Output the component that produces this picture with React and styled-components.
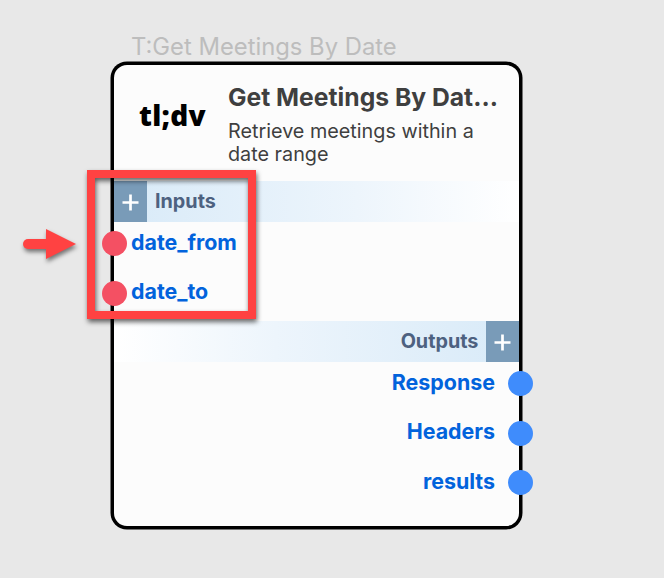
import React from "react";
import styled, { createGlobalStyle } from "styled-components";

const GlobalStyle = createGlobalStyle`
  * { box-sizing: border-box; }
  body { margin: 0; background: #e8e8e8; font-family: Inter, sans-serif; overflow: hidden; }
`;

const Canvas = styled.main`
  position: relative;
  width: 664px;
  height: 578px;
  padding: 32px 0 0 111px;
  background: #e8e8e8;
`;

const NodeLabel = styled.div`
  height: 30px;
  padding-left: 20px;
  line-height: 30px;
  font-size: 23.8px;
  color: #bdbdbd;
  white-space: nowrap;
`;

const NodeCard = styled.section`
  display: flex;
  flex-direction: column;
  width: 411.4px;
  height: 467.4px;
  border: 3px solid #000;
  border-radius: 16px;
  background: #fcfcfc;
  box-shadow: 0 0 0 0.5px #000;
`;

const Header = styled.header`
  display: flex;
  height: 115.5px;
  padding: 15px 20px 0 25px;
`;

const Logo = styled.div`
  width: 89px;
  padding-top: 15px;
  line-height: 40px;
  font-family: "Noto Sans", sans-serif;
  font-weight: 900;
  font-size: 28px;
  letter-spacing: 0.3px;
  color: #000;
`;

const Summary = styled.div`
  white-space: nowrap;
`;

const Title = styled.h1`
  margin: 0;
  line-height: 34px;
  font-size: 24.7px;
  font-weight: 700;
  color: #3f3f3f;
`;

const Description = styled.p`
  margin: 6px 0 0;
  line-height: 23px;
  font-size: 19.8px;
  color: #3f3f3f;
`;

const SectionBar = styled.div`
  display: flex;
  flex-direction: ${(p) => (p.$output ? "row-reverse" : "row")};
  height: 41.4px;
  gap: 8px;
  background: linear-gradient(${(p) => (p.$output ? "to left" : "to right")}, #d8eaf8, #edf5fc 60%, #fff);
`;

const AddButton = styled.button`
  display: grid;
  place-items: center;
  width: 33px;
  height: 100%;
  padding: 3px 0 0;
  border: 0;
  background: #799bb8;
`;

const SectionTitle = styled.h2`
  margin: 0;
  line-height: 40px;
  font-size: 19.8px;
  font-weight: 700;
  color: #4d6180;
`;

const Ports = styled.div`
  display: flex;
  flex-direction: column;
  gap: 24.5px;
  height: ${(p) => (p.$output ? "auto" : "98.7px")};
  padding-top: 9.4px;
`;

const Port = styled.div`
  display: flex;
  align-items: center;
  flex-direction: ${(p) => (p.$output ? "row-reverse" : "row")};
  gap: ${(p) => (p.$output ? "13px" : "4px")};
  height: 25px;
  margin: ${(p) => (p.$output ? "0 -13.6px 0 0" : "0 0 0 -12px")};
`;

const Dot = styled.span`
  width: 25px;
  height: 25px;
  border-radius: 50%;
  background: ${(p) => (p.$output ? "#3f8cfc" : "#f45063")};
`;

const PortName = styled.span`
  margin-top: -3.4px;
  line-height: 25px;
  font-size: 21.4px;
  font-weight: 700;
  color: #0263dc;
`;

const Highlight = styled.div`
  position: absolute;
  left: 87px;
  top: 170px;
  width: 169px;
  height: 149px;
  border: 8px solid #ff4242;
  filter: drop-shadow(1px 3px 2.5px rgba(0, 0, 0, 0.6));
`;

const Pointer = styled.svg`
  position: absolute;
  left: 15px;
  top: 222px;
  filter: drop-shadow(1px 3px 2px rgba(0, 0, 0, 0.5));
`;

function Add({ label }) {
  return (
    <AddButton aria-label={label}>
      <svg width="17" height="17" viewBox="0 0 17 17">
        <path d="M8.5 .5v16M.5 8.5h16" stroke="#fff" strokeWidth="2.7" />
      </svg>
    </AddButton>
  );
}

function PortGroup({ title, names, output }) {
  return (
    <>
      <SectionBar $output={output}>
        <Add label={`Add to ${title}`} />
        <SectionTitle>{title}</SectionTitle>
      </SectionBar>
      <Ports $output={output}>
        {names.map((name) => (
          <Port key={name} $output={output}>
            <Dot $output={output} />
            <PortName>{name}</PortName>
          </Port>
        ))}
      </Ports>
    </>
  );
}

export default function App() {
  return (
    <Canvas>
      <GlobalStyle />
      <NodeLabel>T:Get Meetings By Date</NodeLabel>
      <NodeCard>
        <Header>
          <Logo>tl;dv</Logo>
          <Summary>
            <Title>Get Meetings By Dat...</Title>
            <Description>
              Retrieve meetings within a<br />date range
            </Description>
          </Summary>
        </Header>
        <PortGroup title="Inputs" names={["date_from", "date_to"]} />
        <PortGroup title="Outputs" names={["Response", "Headers", "results"]} output />
      </NodeCard>
      <Highlight />
      <Pointer width="68" height="46" viewBox="0 0 68 46">
        <path d="M13 22H34" stroke="#ff4242" strokeWidth="10" strokeLinecap="round" />
        <path d="M31 7L61 22L31 37Z" fill="#ff4242" />
      </Pointer>
    </Canvas>
  );
}
